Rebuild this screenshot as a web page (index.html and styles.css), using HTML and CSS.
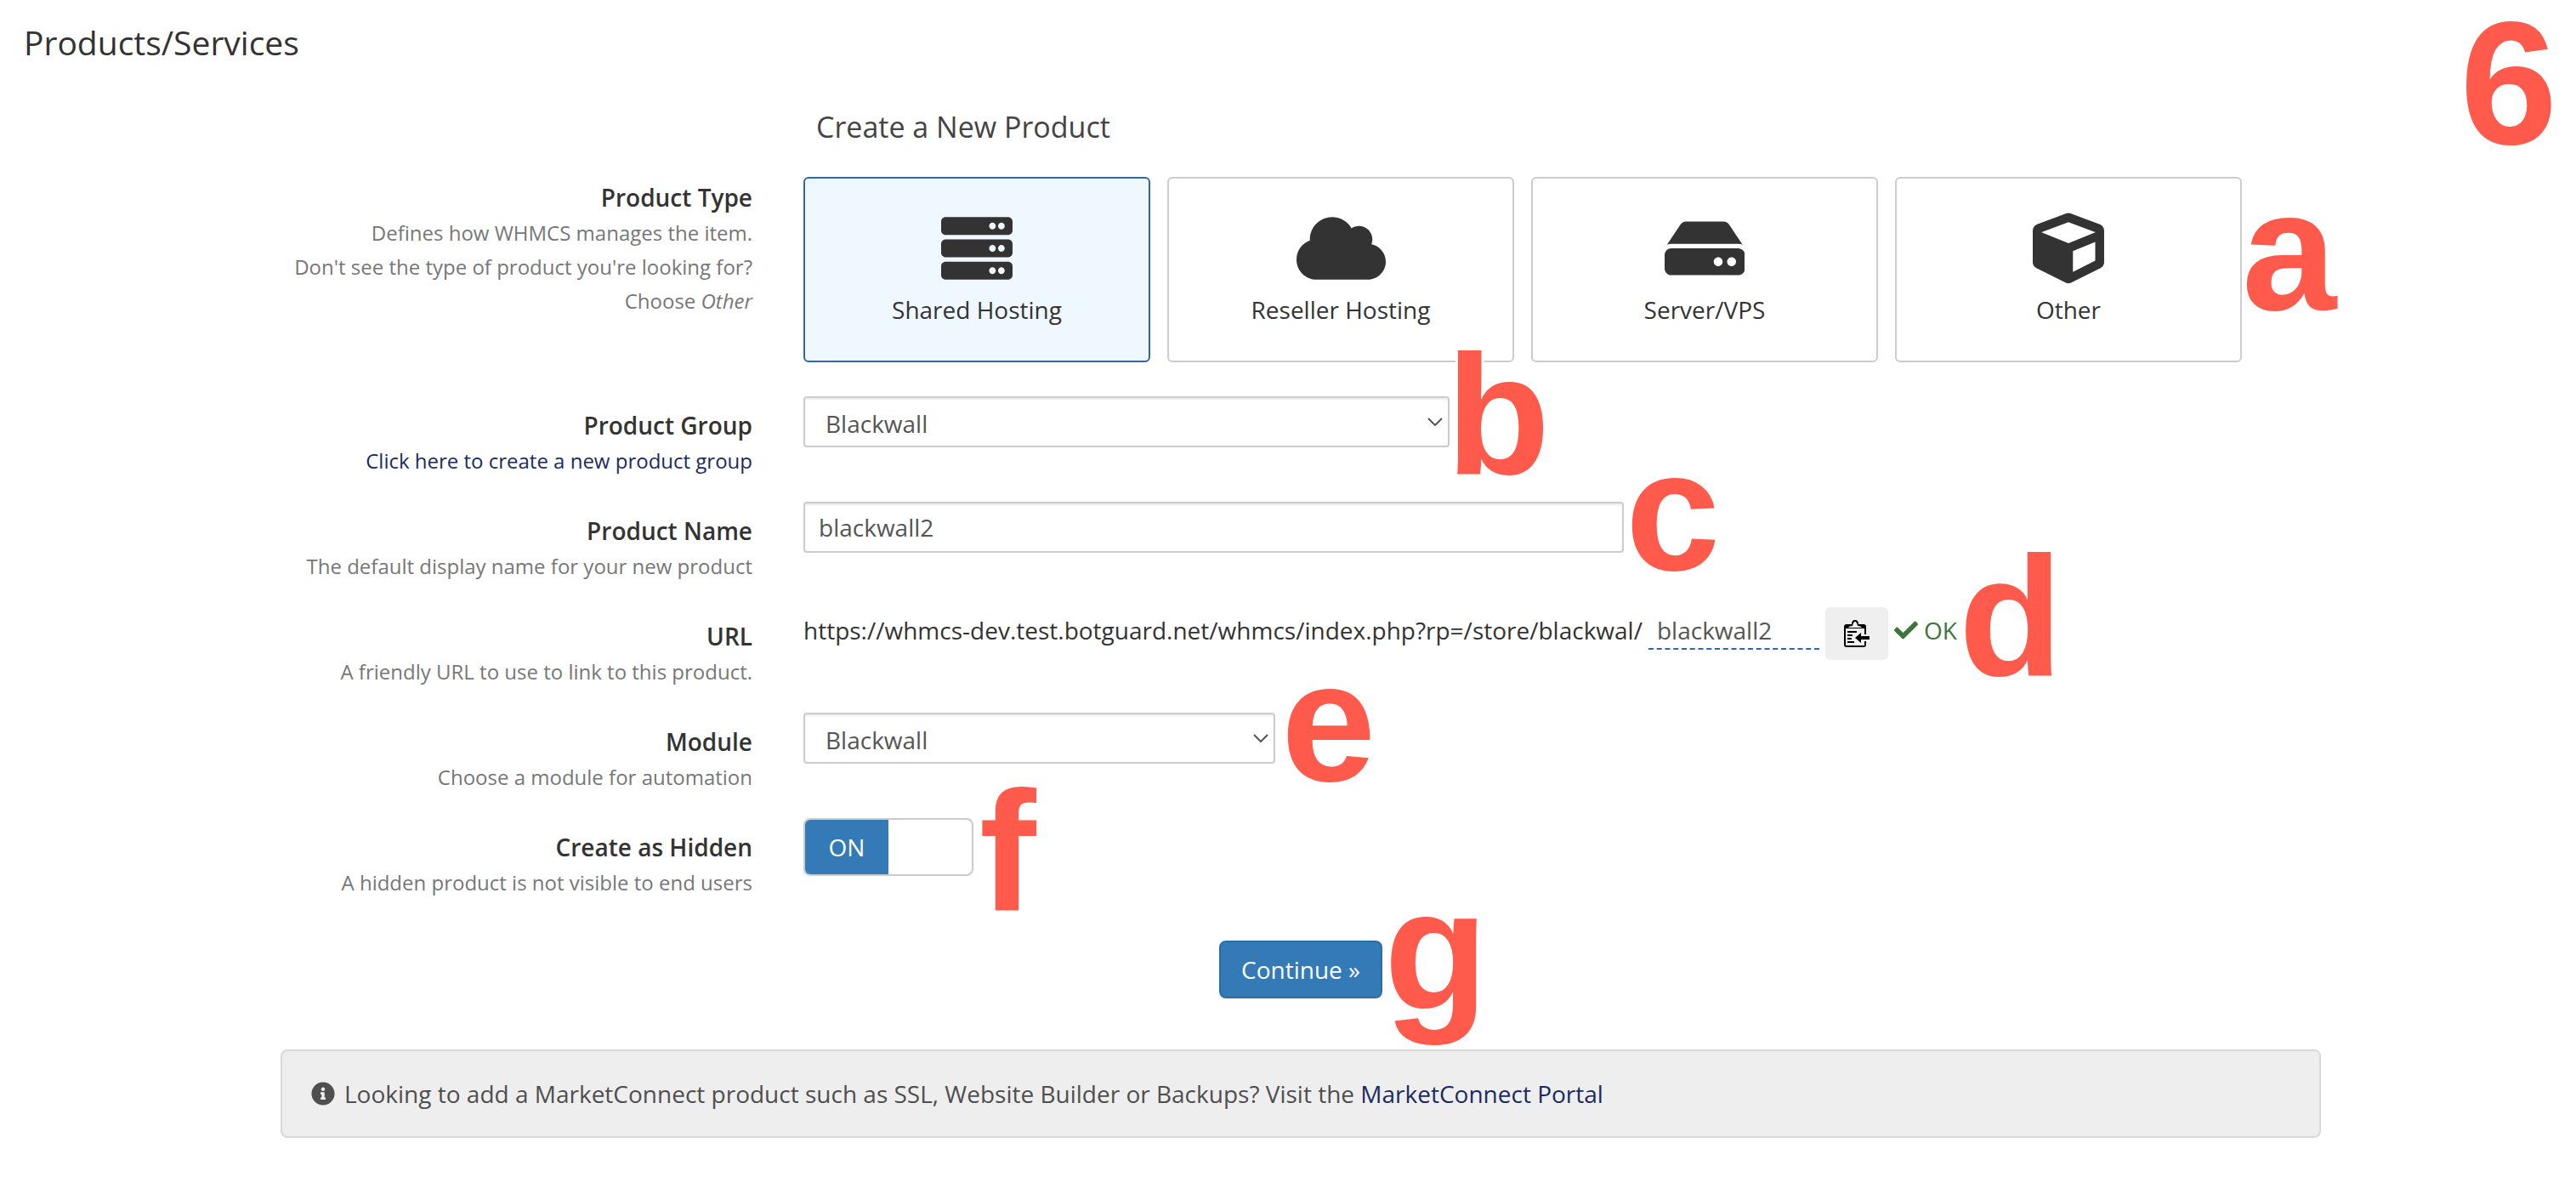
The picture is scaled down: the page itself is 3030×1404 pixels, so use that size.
FILE: index.html
```html
<!DOCTYPE html>
<html lang="en">
<head>
<meta charset="utf-8">
<meta name="viewport" content="width=device-width, initial-scale=1">
<title>Products/Services</title>
<link rel="stylesheet" href="styles.css">
</head>
<body>
<main class="page">
  <h1 class="page-title">Products/Services</h1>
  <span class="step step-page">6</span>

  <form class="product-form">
    <h2 class="form-title">Create a New Product</h2>

    <div class="row row-type">
      <div class="row-label">
        <strong id="type-label">Product Type</strong><br>
        <small>Defines how WHMCS manages the item.<br>Don't see the type of product you're looking for?<br>Choose <em>Other</em></small>
      </div>
      <div class="field type-list" role="radiogroup" aria-labelledby="type-label">
        <label class="type-card">
          <input type="radio" name="type" value="shared" checked>
          <svg class="type-icon" viewBox="0 0 512 512" aria-hidden="true"><path d="M480 160H32c-17.673 0-32-14.327-32-32V64c0-17.673 14.327-32 32-32h448c17.673 0 32 14.327 32 32v64c0 17.673-14.327 32-32 32zm-48-88c-13.255 0-24 10.745-24 24s10.745 24 24 24 24-10.745 24-24-10.745-24-24-24zm-64 0c-13.255 0-24 10.745-24 24s10.745 24 24 24 24-10.745 24-24-10.745-24-24-24zm112 248H32c-17.673 0-32-14.327-32-32v-64c0-17.673 14.327-32 32-32h448c17.673 0 32 14.327 32 32v64c0 17.673-14.327 32-32 32zm-48-88c-13.255 0-24 10.745-24 24s10.745 24 24 24 24-10.745 24-24-10.745-24-24-24zm-64 0c-13.255 0-24 10.745-24 24s10.745 24 24 24 24-10.745 24-24-10.745-24-24-24zm112 248H32c-17.673 0-32-14.327-32-32v-64c0-17.673 14.327-32 32-32h448c17.673 0 32 14.327 32 32v64c0 17.673-14.327 32-32 32zm-48-88c-13.255 0-24 10.745-24 24s10.745 24 24 24 24-10.745 24-24-10.745-24-24-24zm-64 0c-13.255 0-24 10.745-24 24s10.745 24 24 24 24-10.745 24-24-10.745-24-24-24z"/></svg>
          <span>Shared Hosting</span>
        </label>
        <label class="type-card">
          <input type="radio" name="type" value="reseller">
          <svg class="type-icon" viewBox="0 0 640 512" aria-hidden="true"><path d="M537.6 226.6c4.1-10.7 6.4-22.4 6.4-34.6 0-53-43-96-96-96-19.7 0-38.1 6-53.3 16.2C367 64.2 315.3 32 256 32c-88.4 0-160 71.6-160 160 0 2.7.1 5.4.2 8.1C40.2 219.8 0 273.2 0 336c0 79.5 64.5 144 144 144h368c70.7 0 128-57.3 128-128 0-61.9-44-113.6-102.4-125.4z"/></svg>
          <span>Reseller Hosting</span>
        </label>
        <label class="type-card">
          <input type="radio" name="type" value="server">
          <svg class="type-icon" viewBox="0 0 576 512" aria-hidden="true"><path d="M576 304v96c0 26.51-21.49 48-48 48H48c-26.51 0-48-21.49-48-48v-96c0-26.51 21.49-48 48-48h480c26.51 0 48 21.49 48 48zm-48-80a79.557 79.557 0 0 1 30.777 6.165L462.25 85.374A48.003 48.003 0 0 0 422.311 64H153.689a48 48 0 0 0-39.938 21.374L17.223 230.165A79.557 79.557 0 0 1 48 224h480zm-48 96c-17.673 0-32 14.327-32 32s14.327 32 32 32 32-14.327 32-32-14.327-32-32-32zm-96 0c-17.673 0-32 14.327-32 32s14.327 32 32 32 32-14.327 32-32-14.327-32-32-32z"/></svg>
          <span>Server/VPS</span>
        </label>
        <label class="type-card">
          <input type="radio" name="type" value="other">
          <svg class="type-icon" viewBox="0 0 512 512" aria-hidden="true"><path d="M239.1 6.3l-208 78c-18.7 7-31.1 25-31.1 45v225.1c0 18.2 10.3 34.8 26.5 42.9l208 104c13.5 6.8 29.4 6.8 42.9 0l208-104c16.3-8.1 26.5-24.8 26.5-42.9V129.3c0-20-12.4-37.9-31.1-44.9l-208-78C262 2.2 250 2.2 239.1 6.3zM256 68.4l192 72v1.1l-192 78-192-78v-1.1l192-72zm32 356V275.5l160-65v133.9l-160 80z"/></svg>
          <span>Other</span>
        </label>
        <span class="step step-a">a</span>
      </div>
    </div>

    <div class="row">
      <div class="row-label">
        <label for="group">Product Group</label><br>
        <small><a href="#new-group">Click here to create a new product group</a></small>
      </div>
      <div class="field field-group">
        <select class="control" id="group"><option>Blackwall</option></select>
        <svg class="chevron" viewBox="0 0 18 10" aria-hidden="true"><path d="M1 1l8 8 8-8"/></svg>
        <span class="step step-b">b</span>
      </div>
    </div>

    <div class="row">
      <div class="row-label">
        <label for="name">Product Name</label><br>
        <small>The default display name for your new product</small>
      </div>
      <div class="field field-name">
        <input class="control" id="name" type="text" value="blackwall2">
        <span class="step step-c">c</span>
      </div>
    </div>

    <div class="row">
      <div class="row-label">
        <label for="slug">URL</label><br>
        <small>A friendly URL to use to link to this product.</small>
      </div>
      <div class="field field-url">
        <span>https://whmcs-dev.test.botguard.net/whmcs/index.php?rp=/store/blackwal/</span>
        <input class="slug" id="slug" type="text" value="blackwall2">
        <button class="copy" type="button" aria-label="Copy URL">
          <svg viewBox="0 0 30 32" aria-hidden="true">
            <path d="M0 8q0-3 3-3h5v3h10V5h5q3 0 3 3v9h-2v-7H2v20h22v-5h2v4q0 3-3 3H3q-3 0-3-3z"/>
            <path d="M3 10q0-4 6-5 0-5 4-5t4 5q6 1 6 5z"/>
            <path class="copy-clip" d="M5 9q1-2 5-2 1-5 3-5t3 5q4 0 5 2z"/>
            <path class="copy-lines" d="M4 14h11M4 18h6M4 22h5M4 26h8"/>
            <path d="M30 19v4H20v4l-7-6 7-6v4z"/>
          </svg>
        </button>
        <span class="status">
          <svg viewBox="0 0 512 512" aria-hidden="true"><path d="M173.898 439.404l-166.4-166.4c-9.997-9.997-9.997-26.206 0-36.204l36.203-36.204c9.997-9.998 26.207-9.998 36.204 0L192 312.69 432.095 72.596c9.997-9.997 26.207-9.997 36.204 0l36.203 36.204c9.997 9.997 9.997 26.206 0 36.204l-294.4 294.401c-9.998 9.997-26.207 9.997-36.204-.001z"/></svg>
          OK
        </span>
        <span class="step step-d">d</span>
      </div>
    </div>

    <div class="row">
      <div class="row-label">
        <label for="module">Module</label><br>
        <small>Choose a module for automation</small>
      </div>
      <div class="field field-module">
        <select class="control" id="module"><option>Blackwall</option></select>
        <svg class="chevron" viewBox="0 0 18 10" aria-hidden="true"><path d="M1 1l8 8 8-8"/></svg>
        <span class="step step-e">e</span>
      </div>
    </div>

    <div class="row">
      <div class="row-label">
        <label for="hidden">Create as Hidden</label><br>
        <small>A hidden product is not visible to end users</small>
      </div>
      <div class="field field-toggle">
        <label class="toggle">
          <input id="hidden" type="checkbox" checked>
          <span>ON</span>
        </label>
        <span class="step step-f">f</span>
      </div>
    </div>

    <div class="actions">
      <button class="continue" type="submit">Continue »</button>
      <span class="step step-g">g</span>
    </div>

    <p class="notice">
      <svg viewBox="0 0 512 512" aria-hidden="true"><path d="M256 8C119.043 8 8 119.083 8 256c0 136.997 111.043 248 248 248s248-111.003 248-248C504 119.083 392.957 8 256 8zm0 110c23.196 0 42 18.804 42 42s-18.804 42-42 42-42-18.804-42-42 18.804-42 42-42zm56 254c0 6.627-5.373 12-12 12h-88c-6.627 0-12-5.373-12-12v-24c0-6.627 5.373-12 12-12h12v-64h-12c-6.627 0-12-5.373-12-12v-24c0-6.627 5.373-12 12-12h64c6.627 0 12 5.373 12 12v100h12c6.627 0 12 5.373 12 12v24z"/></svg>
      <span>Looking to add a MarketConnect product such as SSL, Website Builder or Backups? Visit the <a href="#marketconnect">MarketConnect Portal</a></span>
    </p>
  </form>
</main>
</body>
</html>
```
FILE: styles.css
```css
* {
  box-sizing: border-box;
}

body {
  margin: 0;
  background: #fff;
  color: #333;
  font: 28px/40px "Open Sans", sans-serif;
}

a {
  color: #1a2b63;
  text-decoration: none;
}

input,
select,
button {
  font: inherit;
}

.page {
  position: relative;
  padding: 28px 0 66px;
}

.page-title {
  margin: 0 0 57px;
  padding-left: 28px;
  font-size: 39px;
  font-weight: 400;
  line-height: 44px;
}

.product-form {
  max-width: 2430px;
  margin: 0 auto;
  padding-left: 30px;
}

.form-title {
  margin: 0 0 39px;
  padding-left: 630px;
  color: #444;
  font-size: 34px;
  font-weight: 400;
}

/* Form rows */

.row {
  display: grid;
  grid-template-columns: 555px minmax(0, 1fr);
  column-gap: 60px;
  align-items: start;
  margin-bottom: 30px;
}

.row-type {
  margin-bottom: 40px;
}

.row-label {
  padding-top: 14px;
  text-align: right;
}

.row-type .row-label {
  padding-top: 4px;
}

.row-label strong,
.row-label label {
  font-weight: 600;
}

.row-label small {
  color: #777;
  font-size: 24px;
  line-height: 1;
}

.field {
  position: relative;
  max-width: 100%;
}

.field-group {
  width: 760px;
}

.field-name {
  width: 965px;
}

.field-module {
  width: 555px;
}

.field-toggle {
  width: 200px;
}

/* Product type cards */

.type-list {
  display: flex;
  gap: 20px;
  max-width: 1692px;
}

.type-card {
  flex: 1 1 0;
  display: flex;
  flex-direction: column;
  align-items: center;
  gap: 10px;
  padding: 40px 0;
  border: 2px solid #ccc;
  border-radius: 6px;
}

.type-card:has(:checked) {
  border-color: #31689f;
  background: #eff7ff;
}

.type-card input {
  position: absolute;
  opacity: 0;
}

.type-icon {
  height: 84px;
  fill: #333;
}

/* Controls */

.control {
  display: block;
  width: 100%;
  height: 60px;
  padding: 0 16px;
  border: 2px solid #ccc;
  border-radius: 4px;
  background: #fff;
  box-shadow: inset 0 2px 2px rgba(0, 0, 0, 0.075);
  color: #555;
  appearance: none;
}

select.control {
  padding: 3px 24px 0;
}

.chevron {
  position: absolute;
  top: 25px;
  right: 8px;
  width: 18px;
  fill: none;
  stroke: #555;
  stroke-width: 2;
}

.field-url {
  display: flex;
  align-items: flex-start;
  gap: 7px;
  width: max-content;
  line-height: 54px;
}

.slug {
  width: 201px;
  height: 50px;
  padding: 6px 10px 0;
  border: 0;
  border-bottom: 2px dashed #31689f;
  background: none;
  color: #555;
}

.copy {
  display: grid;
  place-items: center;
  width: 74px;
  height: 62px;
  padding: 0;
  border: 0;
  border-radius: 6px;
  background: #efefef;
}

.copy svg {
  width: 30px;
}

.copy-clip {
  fill: #efefef;
}

.copy-lines {
  fill: none;
  stroke: #000;
  stroke-width: 2;
}

.status {
  display: flex;
  align-items: center;
  gap: 7px;
  color: #3c763d;
}

.status svg {
  width: 28px;
  fill: currentColor;
}

.toggle {
  display: flex;
  height: 68px;
  overflow: hidden;
  border: 2px solid #ccc;
  border-radius: 8px;
}

.toggle input {
  position: absolute;
  opacity: 0;
}

.toggle span {
  width: 50%;
  background: #337ab7;
  color: #fff;
  line-height: 64px;
  text-align: center;
}

/* Footer of the form */

.actions {
  position: relative;
  width: max-content;
  margin: 50px auto 60px;
}

.continue {
  display: block;
  height: 68px;
  padding: 0 24px;
  border: 2px solid #2e6da4;
  border-radius: 8px;
  background: #337ab7;
  color: #fff;
}

.notice {
  display: flex;
  align-items: center;
  gap: 11px;
  margin: 0;
  padding: 30px 34px;
  border: 2px solid #d9d9d9;
  border-radius: 8px;
  background: #eee;
  color: #4f4f4f;
}

.notice svg {
  width: 28px;
  fill: currentColor;
}

/* Step markers laid over the form */

.step {
  position: absolute;
  left: 100%;
  color: #ff5a4b;
  font: 700 200px/200px "Liberation Sans", sans-serif;
  -webkit-text-stroke: 6px #fff;
  paint-order: stroke fill;
  pointer-events: none;
}

.step-page {
  top: -2px;
  right: 22px;
  left: auto;
  font-size: 206px;
}

.step-a {
  top: -13px;
}

.step-b {
  top: -78px;
  margin-left: -4px;
}

.step-c,
.step-d,
.step-e,
.step-g {
  top: -89px;
  margin-left: 2px;
}

.step-e,
.step-f {
  margin-left: 7px;
}

.step-f {
  top: -61px;
}
```
